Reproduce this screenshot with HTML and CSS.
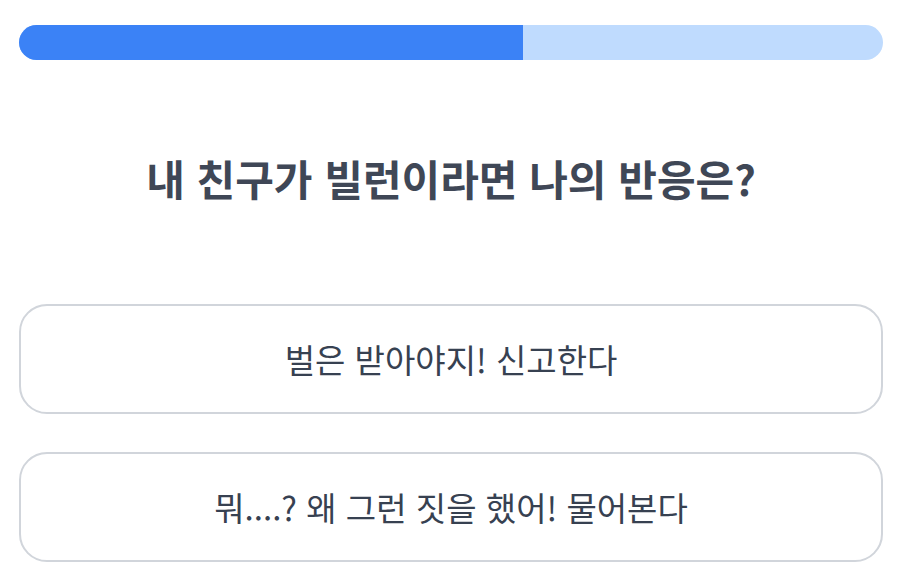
FILE: index.html
```html
<!DOCTYPE html>
<html lang="ko">
<head>
  <meta charset="UTF-8" />
  <meta name="viewport" content="width=device-width, initial-scale=1.0" />
  <title>빌런 테스트</title>
  <link rel="stylesheet" href="styles.css">
</head>
<body>
  <div class="container">
    <div class="progress">
      <div class="progress-fill" style="width: 58.3%"></div>
    </div>
    <div class="question">내 친구가 빌런이라면 나의 반응은?</div>
    <div class="answers">
      <button class="answer">벌은 받아야지! 신고한다</button>
      <button class="answer">뭐....? 왜 그런 짓을 했어! 물어본다</button>
    </div>
  </div>
</body>
</html>
```

FILE: styles.css
```css
body {
  font-family: "Noto Sans CJK KR", "Noto Sans", sans-serif;
  background-color: #fff;
  margin: 0;
}

.container {
  padding: 25px 21px 0 19px;
}

.progress {
  height: 35px;
  background-color: #bfdbfe;
  border-radius: 18px;
  overflow: hidden;
}

.progress-fill {
  height: 100%;
  background-color: #3b82f6;
}

.question {
  margin-top: 92px;
  text-align: center;
  font-size: 42px;
  font-weight: bold;
  color: #3f4756;
  line-height: 52px;
}

.answers {
  margin-top: 100px;
  display: flex;
  flex-direction: column;
  gap: 38px;
}

.answer {
  height: 110px;
  background-color: #fff;
  border: 2px solid #d1d5db;
  border-radius: 28px;
  font-family: inherit;
  font-size: 33px;
  color: #374151;
  cursor: pointer;
}
```
